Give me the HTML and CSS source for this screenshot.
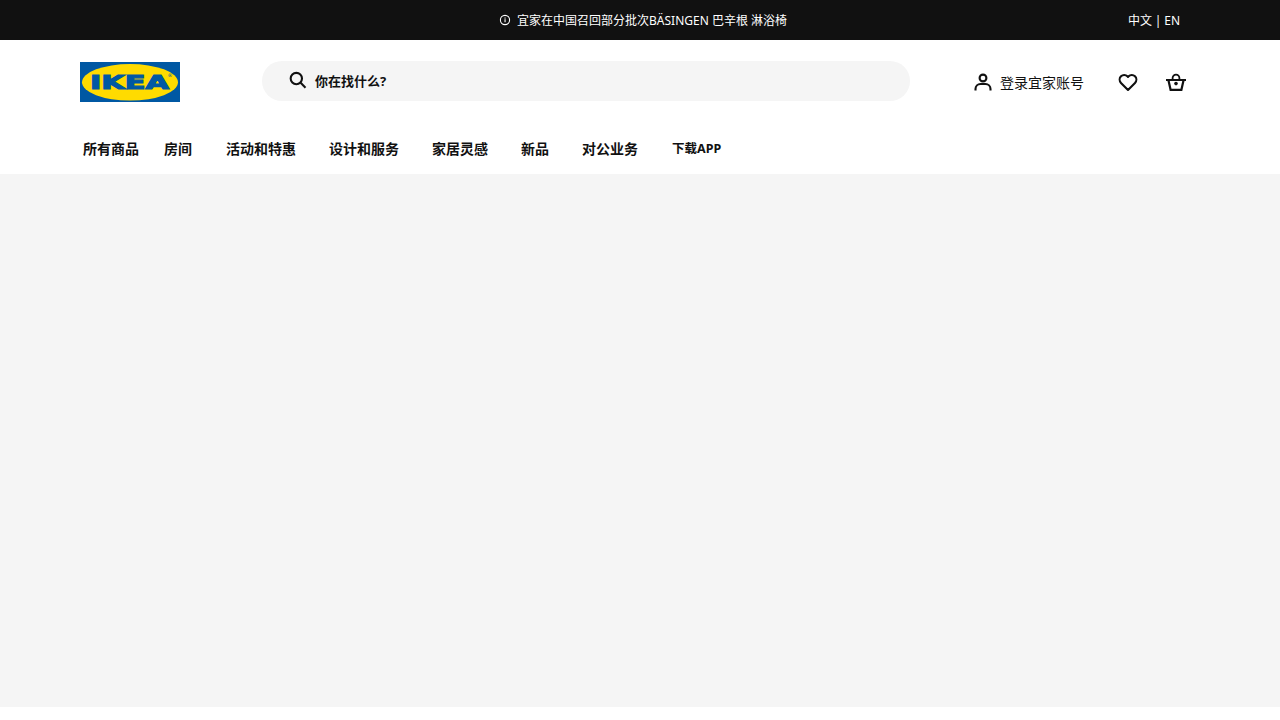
FILE: index.html
```html
<!DOCTYPE html>
<html lang="zh-CN">
<head>
<meta charset="utf-8">
<title>宜家</title>
<link rel="stylesheet" href="styles.css">
</head>
<body>
<div class="topbar">
  <div class="notice">
    <svg class="notice-icon" viewBox="0 0 12 12" width="12" height="12"><circle cx="6" cy="6" r="4.6" fill="none" stroke="#fff" stroke-width="1.1"/><rect x="5.5" y="5.2" width="1.1" height="3" fill="#fff"/><rect x="5.5" y="3.5" width="1.1" height="1.1" fill="#fff"/></svg>
    <span>宜家在中国召回部分批次BÄSINGEN 巴辛根 淋浴椅</span>
  </div>
  <div class="lang">中文 | EN</div>
</div>
<header class="header">
  <div class="header-row">
    <svg class="logo" viewBox="0 0 100 40" width="100" height="40">
      <rect width="100" height="40" fill="#0058a3"/>
      <ellipse cx="50" cy="20.3" rx="48" ry="18.3" fill="#ffdb00"/>
      <text x="49.5" y="27.3" class="logo-text" text-anchor="middle" textLength="79" lengthAdjust="spacingAndGlyphs">IKEA</text>
      <text x="90" y="15" class="logo-mark" text-anchor="middle">®</text>
    </svg>
    <div class="search">
      <svg class="search-icon" viewBox="0 0 24 24" width="20" height="20"><circle cx="10" cy="10.2" r="6.8" fill="none" stroke="#111" stroke-width="2.5"/><path d="M14.9 15.1 21 21.2" fill="none" stroke="#111" stroke-width="2.5"/></svg>
      <span>你在找什么?</span>
    </div>
    <div class="login">
      <svg viewBox="0 0 24 24" width="24" height="24"><circle cx="12" cy="8" r="3.4" fill="none" stroke="#111" stroke-width="2.1"/><path d="M4.5 20.5v-1.5a5 5 0 0 1 5-5h5a5 5 0 0 1 5 5v1.5" fill="none" stroke="#111" stroke-width="2.1"/></svg>
      <span>登录宜家账号</span>
    </div>
    <svg class="heart" viewBox="0 0 24 24" width="24" height="24"><path d="M12 20 5 12.9a4.7 4.7 0 0 1 0-6.6 4.5 4.5 0 0 1 6.4 0l.6.6.6-.6a4.5 4.5 0 0 1 6.4 0 4.7 4.7 0 0 1 0 6.6Z" fill="none" stroke="#111" stroke-width="2.1" stroke-linejoin="round"/></svg>
    <svg class="basket" viewBox="0 0 24 24" width="24" height="24"><path d="M2 10h20M4.4 10 6.6 19.8h10.8L19.6 10" fill="none" stroke="#111" stroke-width="2.2"/><path d="M8.6 10V8a3.4 3.4 0 0 1 6.8 0v2" fill="none" stroke="#111" stroke-width="1.8"/><circle cx="12" cy="13.6" r="1.8" fill="#111"/></svg>
  </div>
  <nav class="nav">
    <a class="nav-item first">所有商品</a>
    <a class="nav-item second">房间</a>
    <a class="nav-item">活动和特惠</a>
    <a class="nav-item">设计和服务</a>
    <a class="nav-item">家居灵感</a>
    <a class="nav-item">新品</a>
    <a class="nav-item">对公业务</a>
    <a class="nav-item app">下载APP</a>
  </nav>
</header>
<main class="main"></main>
</body>
</html>
```
FILE: styles.css
```css
* { box-sizing: border-box; }
html, body { margin: 0; height: 100%; }
body {
  background: #fff;
  color: #111;
  font-family: "Noto Sans", "Noto Sans CJK SC", sans-serif;
  overflow: hidden;
}
.topbar {
  height: 40px;
  background: #111;
  color: #fff;
  font-size: 12px;
  display: flex;
  align-items: center;
  padding-left: 499px;
  padding-right: 100px;
}
.notice { display: flex; align-items: center; gap: 6px; }
.notice-icon { display: block; }
.lang { margin-left: auto; word-spacing: -.3px; }
.header { background: #fff; height: 134px; }
.header-row {
  display: flex;
  align-items: center;
  height: 84px;
  padding-left: 80px;
}
.logo { display: block; flex: none; }
.logo-text {
  font-family: "DejaVu Sans", sans-serif;
  font-weight: 700;
  font-size: 20px;
  fill: #0058a3;
  stroke: #0058a3;
  stroke-width: 1.2px;
}
.logo-mark {
  font-family: "DejaVu Sans", sans-serif;
  font-size: 5px;
  fill: #0058a3;
}
.search {
  width: 648px;
  height: 40px;
  margin-left: 82px;
  margin-bottom: 2px;
  padding: 0 0 2px 26px;
  background: #f5f5f5;
  border-radius: 20px;
  display: flex;
  align-items: center;
  gap: 7px;
  font-size: 13px;
  font-weight: 700;
}
.login {
  display: flex;
  align-items: center;
  gap: 5px;
  margin-left: 61px;
  font-size: 14px;
}
.heart { margin-left: 32px; flex: none; }
.basket { margin-left: 24px; flex: none; }
.nav {
  display: flex;
  padding-left: 83px;
  gap: 33px;
  font-size: 14px;
  font-weight: 700;
  line-height: 20px;
  padding-top: 15px;
}
.nav-item.first { margin-right: -8px; }
.nav-item.second { margin-right: 1px; }
.nav-item.app { font-size: 12.5px; margin-left: 1px; }
.main { height: 533px; background: #f5f5f5; }
```
